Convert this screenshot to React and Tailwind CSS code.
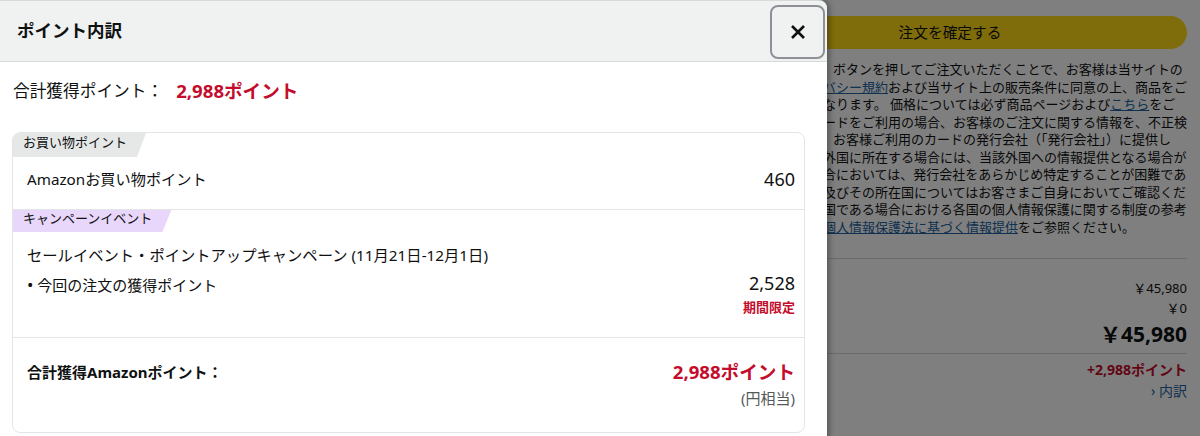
import React from 'react';

const font = "font-['Noto_Sans','Noto_Sans_CJK_JP',sans-serif]";

const noticeLines = [
    { pl: 'pl-[120px]', parts: [['ボタンを押してご注文いただくことで、お客様は当サイトの']] },
    { pl: 'pl-[110px]', parts: [['バシー規約', true], ['および当サイト上の販売条件に同意の上、商品をご']] },
    { pl: 'pl-[110px]', parts: [['なります。 価格については必ず商品ページおよび'], ['こちら', true], ['をご']] },
    { pl: 'pl-[110px]', parts: [['ードをご利用の場合、お客様のご注文に関する情報を、不正検']] },
    { pl: 'pl-[120px]', parts: [['お客様ご利用のカードの発行会社（「発行会社」）に提供し']] },
    { pl: 'pl-[110px]', parts: [['外国に所在する場合には、当該外国への情報提供となる場合が']] },
    { pl: 'pl-[110px]', parts: [['合においては、発行会社をあらかじめ特定することが困難であ']] },
    { pl: 'pl-[110px]', parts: [['及びその所在国についてはお客さまご自身においてご確認くだ']] },
    { pl: 'pl-[110px]', parts: [['国である場合における各国の個人情報保護に関する制度の参考']] },
    { pl: 'pl-[110px]', parts: [['個人情報保護法に基づく情報提供', true], ['をご参照ください。']] },
];

const CheckoutBehind = () => (
    <div className="flex h-full w-full bg-white">
        <div className="ml-auto mr-[13px] w-[474px] pt-[16px] text-[#0f1111]">
            {/* 注文確定ボタン */}
            <div className="flex h-[33px] items-center justify-center rounded-full bg-[#ffd814] text-[14.7px]">
                注文を確定する
            </div>

            {/* 規約の文章 (左側はモーダルの下) */}
            <div className="mt-[12px] text-[13px] leading-[17.5px]">
                {noticeLines.map((line, i) => (
                    <div key={i} className={`whitespace-nowrap ${line.pl}`}>
                        {line.parts.map(([text, link], j) =>
                            link ? (
                                <span key={j} className="text-[#2162a1] underline">{text}</span>
                            ) : (
                                <span key={j}>{text}</span>
                            )
                        )}
                    </div>
                ))}
            </div>

            <div className="mt-[22px] border-t border-[#d5d9d9]" />

            <div className="mt-[19px] text-right">
                <div className="h-[20px] text-[13px] leading-[20px]">￥45,980</div>
                <div className="h-[20px] text-[13px] leading-[20px]">￥0</div>
                <div className="mt-[1px] h-[30px] text-[21px] font-bold leading-[30px]">￥45,980</div>
            </div>

            <div className="mt-[4px] border-t border-[#d5d9d9]" />

            <div className="mt-[6px] text-right">
                <div className="h-[20px] text-[14px] font-bold leading-[20px] text-[#c40c2c]">+2,988ポイント</div>
                <div className="mt-[1px] h-[20px] text-[14px] leading-[20px] text-[#2162a1]">› 内訳</div>
            </div>
        </div>
    </div>
);

const Tag = ({ label, className }) => (
    <div className={`w-fit pl-[10px] pr-[19px] text-[13px] text-[#0f1111] [clip-path:polygon(0_0,100%_0,calc(100%-9px)_100%,0_100%)] ${className}`}>
        {label}
    </div>
);

const PointModal = () => (
    <div className="absolute left-0 top-0 h-[480px] w-[827px] overflow-hidden rounded-tr-lg border-t border-[#d5d9d9] bg-white shadow-[2px_0_6px_rgba(0,0,0,0.35)]">
        {/* ヘッダー */}
        <div className="flex h-[61px] items-start justify-between border-b border-[#d5d9d9] bg-[#f0f2f2]">
            <h2 className="ml-[17px] mt-[17px] text-[17.5px] font-bold leading-[24px] text-[#0f1111]">ポイント内訳</h2>
            <button className="mr-[2px] mt-[4px] flex h-[54px] w-[55px] items-center justify-center rounded-lg border-2 border-[#8d9096] bg-[#f0f2f2]">
                <svg width="16" height="16" viewBox="0 0 16 16" fill="none" stroke="#0f1111" strokeWidth="2.6">
                    <path d="M2 2 L14 14 M14 2 L2 14" />
                </svg>
            </button>
        </div>

        <div className="px-[12px] pt-[17px] text-[#0f1111]">
            <div className="ml-[1px] flex h-[24px] items-center text-[16.7px] leading-[24px]">
                <span>合計獲得ポイント：</span>
                <span className="ml-[13px] text-[18.6px] font-bold text-[#c40c2c]">2,988ポイント</span>
            </div>

            {/* 内訳カード */}
            <div className="mt-[29px] w-[793px] overflow-hidden rounded-lg border border-[#e3e6e6]">
                <Tag label="お買い物ポイント" className="h-[24px] bg-[#e6e8e8] leading-[17px] pt-[1px]" />
                <div className="flex h-[52px] items-start justify-between pl-[14px] pr-[9px] pt-[10px]">
                    <span className="text-[15.2px] leading-[24px]">Amazonお買い物ポイント</span>
                    <span className="text-[18px] leading-[24px]">460</span>
                </div>

                <div className="border-t border-[#e3e6e6]">
                    <Tag label="キャンペーンイベント" className="h-[22px] bg-[#e8d6fb] leading-[17px]" />
                    <div className="pl-[14px] pr-[9px] pb-[21px] pt-[12px]">
                        <div className="text-[15.3px] leading-[22px]">
                            セールイベント・ポイントアップキャンペーン (11月21日-12月1日)
                        </div>
                        <div className="mt-[5px] flex items-start justify-between">
                            <span className="mt-[3px] text-[15px] leading-[22px]">
                                <span className="text-[17px]">•</span> 今回の注文の獲得ポイント
                            </span>
                            <div className="flex flex-col items-end">
                                <span className="text-[18px] leading-[24px]">2,528</span>
                                <span className="mt-[3px] text-[13px] font-bold leading-[18px] text-[#c40c2c]">期間限定</span>
                            </div>
                        </div>
                    </div>
                </div>

                <div className="flex items-start justify-between border-t border-[#e3e6e6] pb-[24px] pl-[14px] pr-[9px] pt-[22px]">
                    <span className="text-[15px] font-bold leading-[24px]">合計獲得Amazonポイント：</span>
                    <div className="flex flex-col items-end">
                        <span className="text-[18.6px] font-bold leading-[24px] text-[#c40c2c]">2,988ポイント</span>
                        <span className="mt-[4px] text-[15px] leading-[20px] text-[#565959]">(円相当)</span>
                    </div>
                </div>
            </div>
        </div>
    </div>
);

export default function App() {
    return (
        <div className={`relative h-[436px] w-[1200px] overflow-hidden ${font}`}>
            <CheckoutBehind />
            <div className="absolute inset-0 bg-black/50" />
            <PointModal />
        </div>
    );
}
